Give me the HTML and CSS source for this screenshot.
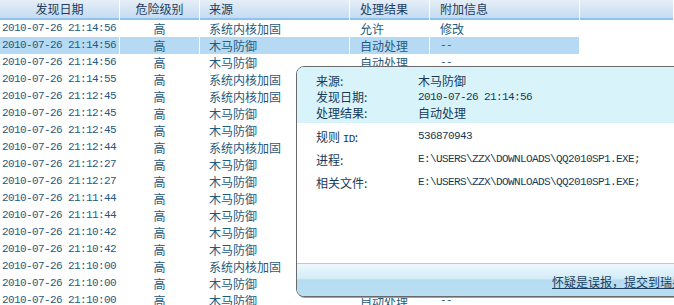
FILE: index.html
```html
<!DOCTYPE html>
<html lang="zh-CN">
<head>
<meta charset="utf-8">
<title>日志</title>
<link rel="stylesheet" href="styles.css">
</head>
<body>
<div class="page">
  <div class="grid">
    <div class="row head">
      <div class="c c1 center">发现日期</div>
      <div class="c c2 center">危险级别</div>
      <div class="c c3">来源</div>
      <div class="c c4">处理结果</div>
      <div class="c c5">附加信息</div>
      <div class="c c6"></div>
    </div>
    <div class="row"><div class="c c1 num">2010-07-26 21:14:56</div><div class="c c2 center">高</div><div class="c c3">系统内核加固</div><div class="c c4">允许</div><div class="c c5">修改</div><div class="c c6"></div></div>
    <div class="row sel"><div class="c c1 num">2010-07-26 21:14:56</div><div class="c c2 center">高</div><div class="c c3">木马防御</div><div class="c c4">自动处理</div><div class="c c5 num">--</div><div class="c c6"></div></div>
    <div class="row"><div class="c c1 num">2010-07-26 21:14:56</div><div class="c c2 center">高</div><div class="c c3">木马防御</div><div class="c c4">自动处理</div><div class="c c5 num">--</div><div class="c c6"></div></div>
    <div class="row"><div class="c c1 num">2010-07-26 21:14:55</div><div class="c c2 center">高</div><div class="c c3">系统内核加固</div><div class="c c4">允许</div><div class="c c5">修改</div><div class="c c6"></div></div>
    <div class="row"><div class="c c1 num">2010-07-26 21:12:45</div><div class="c c2 center">高</div><div class="c c3">系统内核加固</div><div class="c c4">允许</div><div class="c c5">修改</div><div class="c c6"></div></div>
    <div class="row"><div class="c c1 num">2010-07-26 21:12:45</div><div class="c c2 center">高</div><div class="c c3">木马防御</div><div class="c c4">自动处理</div><div class="c c5 num">--</div><div class="c c6"></div></div>
    <div class="row"><div class="c c1 num">2010-07-26 21:12:45</div><div class="c c2 center">高</div><div class="c c3">木马防御</div><div class="c c4">自动处理</div><div class="c c5 num">--</div><div class="c c6"></div></div>
    <div class="row"><div class="c c1 num">2010-07-26 21:12:44</div><div class="c c2 center">高</div><div class="c c3">系统内核加固</div><div class="c c4">允许</div><div class="c c5">修改</div><div class="c c6"></div></div>
    <div class="row"><div class="c c1 num">2010-07-26 21:12:27</div><div class="c c2 center">高</div><div class="c c3">木马防御</div><div class="c c4">自动处理</div><div class="c c5 num">--</div><div class="c c6"></div></div>
    <div class="row"><div class="c c1 num">2010-07-26 21:12:27</div><div class="c c2 center">高</div><div class="c c3">木马防御</div><div class="c c4">自动处理</div><div class="c c5 num">--</div><div class="c c6"></div></div>
    <div class="row"><div class="c c1 num">2010-07-26 21:11:44</div><div class="c c2 center">高</div><div class="c c3">木马防御</div><div class="c c4">自动处理</div><div class="c c5 num">--</div><div class="c c6"></div></div>
    <div class="row"><div class="c c1 num">2010-07-26 21:11:44</div><div class="c c2 center">高</div><div class="c c3">木马防御</div><div class="c c4">自动处理</div><div class="c c5 num">--</div><div class="c c6"></div></div>
    <div class="row"><div class="c c1 num">2010-07-26 21:10:42</div><div class="c c2 center">高</div><div class="c c3">木马防御</div><div class="c c4">自动处理</div><div class="c c5 num">--</div><div class="c c6"></div></div>
    <div class="row"><div class="c c1 num">2010-07-26 21:10:42</div><div class="c c2 center">高</div><div class="c c3">木马防御</div><div class="c c4">自动处理</div><div class="c c5 num">--</div><div class="c c6"></div></div>
    <div class="row"><div class="c c1 num">2010-07-26 21:10:00</div><div class="c c2 center">高</div><div class="c c3">系统内核加固</div><div class="c c4">允许</div><div class="c c5">修改</div><div class="c c6"></div></div>
    <div class="row"><div class="c c1 num">2010-07-26 21:10:00</div><div class="c c2 center">高</div><div class="c c3">木马防御</div><div class="c c4">自动处理</div><div class="c c5 num">--</div><div class="c c6"></div></div>
    <div class="row"><div class="c c1 num">2010-07-26 21:10:00</div><div class="c c2 center">高</div><div class="c c3">木马防御</div><div class="c c4">自动处理</div><div class="c c5 num">--</div><div class="c c6"></div></div>
  </div>

  <div class="popup">
    <div class="pop-top">
      <div class="kv"><span class="k">来源:</span><span class="v">木马防御</span></div>
      <div class="kv"><span class="k">发现日期:</span><span class="v num">2010-07-26 21:14:56</span></div>
      <div class="kv"><span class="k">处理结果:</span><span class="v">自动处理</span></div>
    </div>
    <div class="pop-body">
      <div class="kv2"><span class="k">规则 <span class="num">ID</span>:</span><span class="v num">536870943</span></div>
      <div class="kv2"><span class="k">进程:</span><span class="v num">E:\USERS\ZZX\DOWNLOADS\QQ2010SP1.EXE;</span></div>
      <div class="kv2"><span class="k">相关文件:</span><span class="v num">E:\USERS\ZZX\DOWNLOADS\QQ2010SP1.EXE;</span></div>
    </div>
    <div class="pop-foot">
      <a class="report" href="#">怀疑是误报，提交到瑞星</a>
    </div>
  </div>
</div>
</body>
</html>
```

FILE: styles.css
```css
html, body {
  margin: 0;
  padding: 0;
  overflow: hidden;
  background: #ffffff;
}
body {
  width: 674px;
  height: 305px;
  font-family: "Noto Sans CJK SC", "Noto Sans", sans-serif;
  font-size: 12px;
  color: #1f5a7c;
}
.page {
  position: relative;
  width: 674px;
  height: 305px;
  overflow: hidden;
}
.grid {
  display: flex;
  flex-direction: column;
}
.row {
  display: grid;
  grid-template-columns: 119px 79px 149px 79px 149px 93px;
  column-gap: 1px;
  height: 17px;
  line-height: 17px;
}
.c {
  white-space: nowrap;
  overflow: hidden;
}
.center { text-align: center; }
.c1 { padding-left: 2px; }
.c1.center { padding-left: 0; }
.c3 { padding-left: 9px; }
.c4 { padding-left: 10px; }
.c5 { padding-left: 10px; }
.num {
  font-family: "Liberation Mono", "DejaVu Sans Mono", monospace;
  font-size: 11px;
  letter-spacing: -0.6px;
}
.head {
  height: 20px;
  line-height: 18px;
}
.head .c {
  background: linear-gradient(#e6eef7, #d2e3f4 60%, #c4dcf3);
  border-bottom: 2px solid #8fc2ec;
  color: #1d3d5e;
}
.sel .c1, .sel .c2, .sel .c3, .sel .c4, .sel .c5 {
  background: #b6daf4;
}

.popup {
  position: absolute;
  left: 296px;
  top: 66px;
  width: 400px;
  height: 229px;
  border: 1px solid #6a6a6a;
  border-radius: 8px;
  background: #ffffff;
  color: #173a57;
  display: flex;
  flex-direction: column;
  overflow: hidden;
  box-shadow: 1px 1px 0 #a0a0a0;
}
.pop-top {
  background: #d9f3fb;
  height: 56px;
  padding: 6px 0 0 19px;
  box-sizing: border-box;
}
.kv {
  display: flex;
  height: 16px;
  line-height: 16px;
}
.k {
  width: 102px;
  flex: none;
}
.pop-body {
  flex: 1;
  padding: 2px 0 0 19px;
}
.kv2 {
  display: flex;
  height: 23px;
  line-height: 23px;
}
.pop-foot {
  height: 32px;
  border-top: 1px solid #9fd3ee;
  background: linear-gradient(#eef8fd, #d3ecf8 45%, #b6dcf1 50%, #b9def2);
  padding-left: 255px;
  line-height: 36px;
}
.report {
  color: #1b3e5c;
  text-decoration: underline;
  white-space: nowrap;
}
```
